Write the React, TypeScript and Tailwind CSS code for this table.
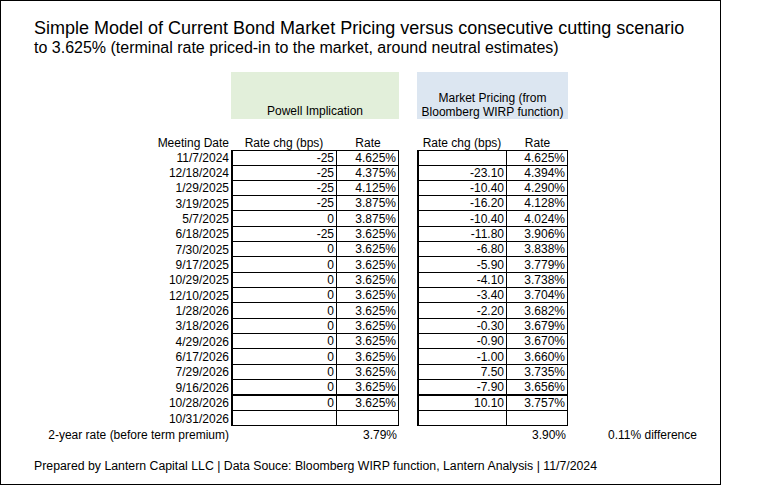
const rows: [string, string, string, string, string][] = [
  ["11/7/2024", "-25", "4.625%", "", "4.625%"],
  ["12/18/2024", "-25", "4.375%", "-23.10", "4.394%"],
  ["1/29/2025", "-25", "4.125%", "-10.40", "4.290%"],
  ["3/19/2025", "-25", "3.875%", "-16.20", "4.128%"],
  ["5/7/2025", "0", "3.875%", "-10.40", "4.024%"],
  ["6/18/2025", "-25", "3.625%", "-11.80", "3.906%"],
  ["7/30/2025", "0", "3.625%", "-6.80", "3.838%"],
  ["9/17/2025", "0", "3.625%", "-5.90", "3.779%"],
  ["10/29/2025", "0", "3.625%", "-4.10", "3.738%"],
  ["12/10/2025", "0", "3.625%", "-3.40", "3.704%"],
  ["1/28/2026", "0", "3.625%", "-2.20", "3.682%"],
  ["3/18/2026", "0", "3.625%", "-0.30", "3.679%"],
  ["4/29/2026", "0", "3.625%", "-0.90", "3.670%"],
  ["6/17/2026", "0", "3.625%", "-1.00", "3.660%"],
  ["7/29/2026", "0", "3.625%", "7.50", "3.735%"],
  ["9/16/2026", "0", "3.625%", "-7.90", "3.656%"],
  ["10/28/2026", "0", "3.625%", "10.10", "3.757%"],
  ["10/31/2026", "", "", "", ""],
];

const grid = "grid grid-cols-[230px_106px_62px_18px_90px_61px_1fr]";

export default function App() {
  return (
    <div className="bg-white text-black [font-family:'Liberation_Sans',Arial,sans-serif]">
      <div className="flex h-[485px] w-[721px] flex-col border border-black">
        <div className="pl-[33px] pt-[17px] leading-[20px]">
          <p className="text-[18px]">
            Simple Model of Current Bond Market Pricing versus consecutive cutting scenario
          </p>
          <p className="text-[16px]">
            to 3.625% (terminal rate priced-in to the market, around neutral estimates)
          </p>
        </div>

        <div className={`${grid} mt-[14px] text-[12px]`}>
          <div />
          <div className="col-span-2 flex h-[47px] items-end justify-center bg-[#e2efda] pb-[1px] leading-[14px]">
            Powell Implication
          </div>
          <div />
          <div className="col-span-2 flex h-[47px] flex-col items-center justify-end bg-[#dce6f1] text-center leading-[14px]">
            <span>Market Pricing (from</span>
            <span>Bloomberg WIRP function)</span>
          </div>
        </div>

        <div className="mt-[16px] text-[12px] leading-[14px]">
          <div className={`${grid} h-[15px] items-center`}>
            <div className="pr-[2px] text-right">Meeting Date</div>
            <div className="text-center">Rate chg (bps)</div>
            <div className="text-center">Rate</div>
            <div />
            <div className="text-center">Rate chg (bps)</div>
            <div className="text-center">Rate</div>
          </div>

          {rows.map((r, i) => {
            const edge = i === 15 ? "border-b-2" : "border-b";
            const top = i === 0 ? "border-t" : "";
            return (
              <div key={r[0]} className={`${grid} h-[15.35px]`}>
                <div className="flex items-center justify-end pr-[2px]">{r[0]}</div>
                <div className={`flex items-center justify-end border-l-2 border-r border-black pr-[2px] ${edge} ${top}`}>
                  {r[1]}
                </div>
                <div className={`flex items-center justify-end border-r border-black pr-[2px] ${edge} ${top}`}>
                  {r[2]}
                </div>
                <div />
                <div className={`flex items-center justify-end border-l-2 border-r border-black pr-[2px] ${edge} ${top}`}>
                  {r[3]}
                </div>
                <div className={`flex items-center justify-end border-r border-black pr-[2px] ${edge} ${top}`}>
                  {r[4]}
                </div>
              </div>
            );
          })}

          <div className={`${grid} h-[18px] items-center`}>
            <div className="pr-[2px] text-right">2-year rate (before term premium)</div>
            <div />
            <div className="pr-[2px] text-right">3.79%</div>
            <div />
            <div />
            <div className="pr-[2px] text-right">3.90%</div>
            <div className="pl-[40px]">0.11% difference</div>
          </div>
        </div>

        <p className="mt-[15px] pl-[33px] text-[12.3px] leading-[14px]">
          Prepared by Lantern Capital LLC | Data Souce: Bloomberg WIRP function, Lantern Analysis | 11/7/2024
        </p>
      </div>
    </div>
  );
}
